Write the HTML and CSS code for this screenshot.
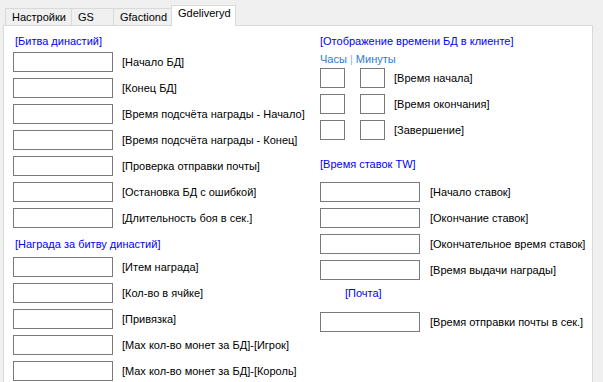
FILE: index.html
```html
<!DOCTYPE html>
<html>
<head>
<meta charset="utf-8">
<link rel="stylesheet" href="styles.css">
</head>
<body>
<div class="tabs">
  <div class="tab t1">Настройки</div>
  <div class="tab t2">GS</div>
  <div class="tab t3">Gfactiond</div>
  <div class="tab t4 active">Gdeliveryd</div>
</div>
<div class="panel">
  <div class="col left">
    <div class="hdr h1">[Битва династий]</div>
    <div class="rows">
      <div class="row"><input class="box"><span class="lbl">[Начало БД]</span></div>
      <div class="row"><input class="box"><span class="lbl">[Конец БД]</span></div>
      <div class="row"><input class="box"><span class="lbl">[Время подсчёта награды - Начало]</span></div>
      <div class="row"><input class="box"><span class="lbl">[Время подсчёта награды - Конец]</span></div>
      <div class="row"><input class="box"><span class="lbl">[Проверка отправки почты]</span></div>
      <div class="row"><input class="box"><span class="lbl">[Остановка БД с ошибкой]</span></div>
      <div class="row"><input class="box"><span class="lbl">[Длительность боя в сек.]</span></div>
    </div>
    <div class="hdr h2">[Награда за битву династий]</div>
    <div class="rows">
      <div class="row"><input class="box"><span class="lbl">[Итем награда]</span></div>
      <div class="row"><input class="box"><span class="lbl">[Кол-во в ячйке]</span></div>
      <div class="row"><input class="box"><span class="lbl">[Привязка]</span></div>
      <div class="row"><input class="box"><span class="lbl">[Max кол-во монет за БД]-[Игрок]</span></div>
      <div class="row"><input class="box"><span class="lbl">[Max кол-во монет за БД]-[Король]</span></div>
    </div>
  </div>
  <div class="col right">
    <div class="hdr h1">[Отображение времени БД в клиенте]</div>
    <div class="hm">Часы <span class="sep">|</span> Минуты</div>
    <div class="rows">
      <div class="row"><input class="sbox"><input class="sbox second"><span class="lbl">[Время начала]</span></div>
      <div class="row"><input class="sbox"><input class="sbox second"><span class="lbl">[Время окончания]</span></div>
      <div class="row"><input class="sbox"><input class="sbox second"><span class="lbl">[Завершение]</span></div>
    </div>
    <div class="hdr h3">[Время ставок TW]</div>
    <div class="rows">
      <div class="row"><input class="box"><span class="lbl wide">[Начало ставок]</span></div>
      <div class="row"><input class="box"><span class="lbl wide">[Окончание ставок]</span></div>
      <div class="row"><input class="box"><span class="lbl wide">[Окончательное время ставок]</span></div>
      <div class="row"><input class="box"><span class="lbl wide">[Время выдачи награды]</span></div>
    </div>
    <div class="hdr h4">[Почта]</div>
    <div class="rows">
      <div class="row"><input class="box"><span class="lbl wide">[Время отправки почты в сек.]</span></div>
    </div>
  </div>
</div>
</body>
</html>
```
FILE: styles.css
```css
html, body {
  margin: 0;
  padding: 0;
  background: #f0f0f0;
  overflow: hidden;
  width: 603px;
  height: 382px;
}
body {
  font-family: "Liberation Sans", Arial, sans-serif;
  font-size: 11px;
  color: #000;
}
.tabs {
  display: flex;
  align-items: flex-end;
  height: 25px;
  padding-left: 5px;
}
.tab {
  box-sizing: border-box;
  height: 17px;
  line-height: 16px;
  padding-left: 6px;
  border: 1px solid #d9d9d9;
  border-bottom: none;
  border-right: none;
  background: #f0f0f0;
  white-space: nowrap;
}
.t1 { width: 66px; }
.t2 { width: 42px; }
.t3 { width: 58px; }
.t4 { width: 65px; }
.tab.active {
  height: 21px;
  line-height: 15px;
  background: #fff;
  border-right: 1px solid #d9d9d9;
  margin-bottom: -1px;
  position: relative;
  z-index: 1;
}
.panel {
  box-sizing: border-box;
  margin-left: 3px;
  width: 590px;
  height: 357px;
  overflow: hidden;
  background: #fff;
  border: 1px solid #d9d9d9;
  border-bottom: none;
  display: flex;
  padding-left: 9px;
}
.col {
  display: flex;
  flex-direction: column;
}
.left {
  width: 307px;
}
.hdr {
  color: #0000ff;
  line-height: 14px;
  white-space: nowrap;
}
.left .hdr { padding-left: 2px; }
.h1 { margin-top: 8px; margin-bottom: 4px; }
.h2 { margin-top: 9px; margin-bottom: 6px; }
.h3 { margin-top: 17px; margin-bottom: 11px; }
.h4 { margin-top: 6px; margin-bottom: 12px; padding-left: 25px; }
.hm {
  color: #2d7bd0;
  line-height: 14px;
  margin-bottom: 2px;
  white-space: nowrap;
}
.sep { color: #7db8f0; }
.rows {
  display: flex;
  flex-direction: column;
  gap: 6px;
}
.row {
  display: flex;
  align-items: center;
  height: 20px;
  flex-shrink: 0;
}
.box, .sbox {
  box-sizing: border-box;
  height: 20px;
  border: 1px solid #7a7a7a;
  padding: 0;
  margin: 0;
  background: #fff;
  outline: none;
}
.box { width: 100px; }
.sbox { width: 25px; }
.sbox.second { margin-left: 15px; }
.lbl {
  margin-left: 9px;
  white-space: nowrap;
  line-height: 14px;
}
.lbl.wide { margin-left: 10px; }
```
